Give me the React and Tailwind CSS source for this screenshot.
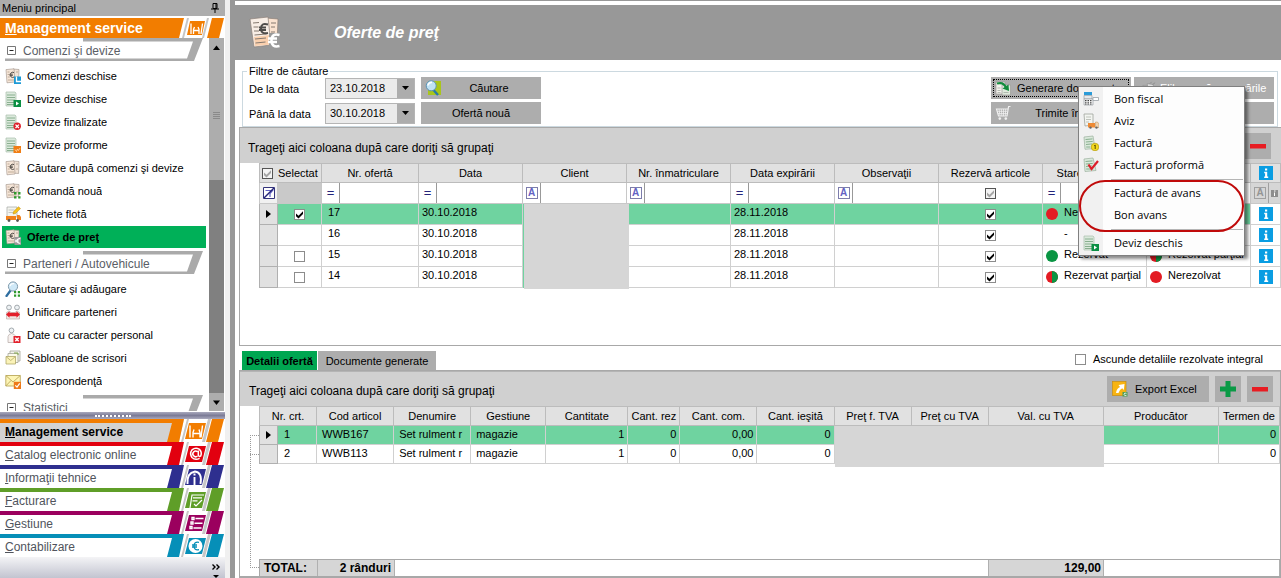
import React from "react";

/* ---------- icons ---------- */

function Icon({ children, className = "size-4" }) {
  return (
    <svg viewBox="0 0 16 16" className={`shrink-0 ${className}`} aria-hidden="true">
      {children}
    </svg>
  );
}

const GreenSheet = () => (
  <>
    <path d="M1 1h9l1 1v13H1z" fill="#dbe9dc" stroke="#a9bfac" strokeWidth=".7" />
    <path d="M2 4h8M2 6.500h8M2 9h8M2 11.500h8M2 13.500h8" stroke="#7fa886" strokeWidth=".9" />
  </>
);

const OfferSheets = () => (
  <>
    <path d="M8 1l6 .5-.4 12-6-.5z" fill="#f0e2d6" stroke="#9d9188" strokeWidth=".6" />
    <path d="M1 1.600L9 .8l1 13.200-8 .8z" fill="#f6e6d8" stroke="#9d9188" strokeWidth=".6" />
    <path d="M2.500 4h2M2.600 6.500h2M2.800 9h2M3 12h6M11 4h2M11 9h2" stroke="#a8927f" strokeWidth=".7" />
    <path d="M9 4.600a2.600 2.600 0 1 0 .2 4.400M4.800 6.200h3M4.800 7.600h3" stroke="#55504c" strokeWidth="1" fill="none" />
  </>
);

const Head = ({ x, y, r = 2.4 }) => <circle cx={x} cy={y} r={r} fill="#eef2f4" stroke="#8f979c" strokeWidth=".8" />;

const PlayBadge = () => (
  <>
    <rect x="8.500" y="9" width="7.500" height="7" fill="#0a8f43" />
    <path d="M11 10.500l3 2-3 2z" fill="#fff" />
  </>
);

const ICONS = {
  ordersOpen: (
    <>
      <OfferSheets />
      <rect x="9" y="8.500" width="7" height="7.500" fill="#1c9ad6" />
      <path d="M11.500 8.500v5h4.500" stroke="#fff" strokeWidth="1.300" fill="none" />
    </>
  ),
  sheetOpen: (
    <>
      <GreenSheet />
      <PlayBadge />
    </>
  ),
  sheetDone: (
    <>
      <GreenSheet />
      <circle cx="12.200" cy="12.300" r="3.700" fill="#dd1f2a" />
      <path d="M10.500 10.600l3.400 3.400M13.900 10.600L10.500 14" stroke="#fff" strokeWidth="1.300" />
    </>
  ),
  sheetProforma: (
    <>
      <GreenSheet />
      <rect x="8.500" y="9" width="7.500" height="7" fill="#f07d14" />
      <path d="M10 12.500l1.500 2 1-2.500 1 1.500 1.500-2.500" stroke="#ffd9a8" strokeWidth=".8" fill="none" />
    </>
  ),
  offers: <OfferSheets />,
  orderNew: (
    <>
      <OfferSheets />
      <path d="M9 9h2.500v2.500H9zM13.200 9h2.300v2.500h-2.300zM9 13.200h2.500v2.300H9zM13.200 13.200h2.300v2.300h-2.300z" fill="#2f9a2c" />
    </>
  ),
  fleet: (
    <>
      <path d="M2 1h10v10H2z" fill="#f3f4ef" stroke="#a5a7a3" strokeWidth=".7" />
      <path d="M3.500 4h6M3.500 6.500h5" stroke="#b9bbb6" strokeWidth=".8" />
      <path d="M1 10h10v4H1zM12 9h2.500L16 11v3h-4z" fill="#f0801c" />
      <circle cx="4" cy="14.500" r="1.400" fill="#555" />
      <circle cx="12.500" cy="14.500" r="1.400" fill="#555" />
      <path d="M8 8l.6-2.400L13.500.8l2 1.800-5 4.900z" fill="#f8c21b" stroke="#b98b10" strokeWidth=".5" />
    </>
  ),
  priceOffer: (
    <>
      <OfferSheets />
      <rect x="9.500" y="8" width="6.500" height="8" fill="#999" />
      <path d="M15.300 9.800a2.300 2.300 0 1 0 0 4.200M10 11.200h3.600M10 12.700h3.600" stroke="#fff" strokeWidth="1.100" fill="none" />
    </>
  ),
  search: (
    <>
      <path d="M5.500 9.500L1.500 15" stroke="#2e6ea0" strokeWidth="2.200" strokeLinecap="round" />
      <circle cx="8" cy="5.500" r="4.600" fill="#cfe8f7" stroke="#7f99ab" />
      <path d="M5 5a3.200 3.200 0 0 1 4-2.300" stroke="#fff" strokeWidth="1.300" fill="none" />
      <path d="M9 10h2.200v2.200H9zM12.800 10H15v2.200h-2.200zM9 13.500h2.200v2.200H9zM12.800 13.500H15v2.200h-2.200z" fill="#2f9a2c" />
    </>
  ),
  merge: (
    <>
      <path d="M1.500 15V8.500q2-2.500 5 0h3q3-2.500 5 0V15z" fill="#f1e7e4" stroke="#b3a7a3" strokeWidth=".6" />
      <Head x={4} y={3.5} />
      <Head x={12} y={3.5} />
      <path d="M1 10.500l3.500-3.300v1.600h7V7.200l3.500 3.300-3.500 3.300v-1.600h-7v1.600z" fill="#e3202b" />
    </>
  ),
  personal: (
    <>
      <path d="M3 15.500V9.500q.5-2.500 3.500-3 3 .5 3.500 2v7z" fill="#f7f1ef" stroke="#b3a7a3" strokeWidth=".7" />
      <Head x={6.5} y={3.4} />
      <rect x="8.500" y="9" width="7" height="7" fill="#e3202b" />
      <path d="M10.300 10.800l3.400 3.400M13.700 10.800l-3.400 3.400" stroke="#fff" strokeWidth="1.400" />
    </>
  ),
  letters: (
    <>
      <path d="M5 1h10v10H5z" fill="#f4f4ee" stroke="#a5a59a" strokeWidth=".8" />
      <path d="M3 3.500h10v9H3z" fill="#fbfaea" stroke="#a5a59a" strokeWidth=".8" />
      <path d="M1 6.500h9.500V14H1z" fill="#fbf3b8" stroke="#b1a86a" strokeWidth=".8" />
      <path d="M1 6.500l4.700 4 4.800-4" fill="none" stroke="#b1a86a" strokeWidth=".8" />
      <path d="M9 3h4v2" stroke="#83a84c" fill="none" />
    </>
  ),
  mail: (
    <>
      <path d="M.8 2.500h14.500V13H.8z" fill="#fdf5b5" stroke="#bba95c" strokeWidth=".9" />
      <path d="M.8 2.500L8 9l7.300-6.500M.8 13L6 7.500" fill="none" stroke="#bba95c" strokeWidth=".9" />
      <rect x="8.800" y="8.800" width="7.200" height="7.200" fill="#ee7a1a" />
      <path d="M10.300 12.300l1.700 1.800 2.700-3.800" stroke="#fff" strokeWidth="1.200" fill="none" />
    </>
  ),
  find: (
    <>
      <path d="M3 1h13v14H3z" fill="#a9c51b" />
      <path d="M8.500 10l4.500 5" stroke="#287aa8" strokeWidth="2.400" />
      <circle cx="6.200" cy="5.800" r="5" fill="#bfe2f5" stroke="#5d93b4" />
      <path d="M3 5.500a3.500 3.500 0 0 1 4-3" stroke="#fff" strokeWidth="1.700" fill="none" />
    </>
  ),
  generate: (
    <>
      <path d="M1 2h9v12H1z" fill="#f5f3ee" stroke="#9e9c98" strokeWidth=".7" />
      <path d="M7 5h8.500v10H7z" fill="#dfeadd" stroke="#9e9c98" strokeWidth=".7" />
      <path d="M2.500 8h3M2.500 10.500h3M8.500 12.500h5M2.500 12.500h3" stroke="#a4aca2" strokeWidth=".8" />
      <path d="M2 3.500q7-2 9 4.500" stroke="#128c3c" strokeWidth="2.200" fill="none" />
      <path d="M7.500 8.500l6.500 2.500-.5-6.500z" fill="#128c3c" />
    </>
  ),
  release: (
    <>
      <path d="M1 5h8v10H1z" fill="#c9c9c9" stroke="#8f8f8f" strokeWidth=".8" />
      <path d="M6 3l7 1-1 9-5-1z" fill="#dedede" stroke="#8f8f8f" strokeWidth=".8" />
      <path d="M9 3l2-2M12 4l3-2M3 8h4M3 11h4" stroke="#8f8f8f" strokeWidth="1.100" />
    </>
  ),
  cart: (
    <>
      <path d="M15.500 1.500H13.600L12 11H3.500L1.500 4h11.300" fill="none" stroke="#f0f0f0" strokeWidth="1.200" />
      <path d="M4 4l1 7M6.300 4l.6 7M8.500 4v7M10.700 4l-.4 7M2.200 6.300h10.200M2.800 8.600h9.300" stroke="#f0f0f0" strokeWidth=".8" />
      <circle cx="4.800" cy="13.600" r="1.300" fill="#f0f0f0" />
      <circle cx="10.800" cy="13.600" r="1.300" fill="#f0f0f0" />
    </>
  ),
  fiscal: (
    <>
      <path d="M1 1h8v3H1z" fill="#2a9bd8" />
      <path d="M1 4.500h8V8H1z" fill="#e5e9ec" stroke="#8a9298" strokeWidth=".6" />
      <path d="M1 8h9v6H1z" fill="#f6f6f6" stroke="#8a9298" strokeWidth=".6" />
      <path d="M2 9.500h7M2 11.300h7M2 13h7" stroke="#444" strokeWidth="1.100" strokeDasharray="1.500 1" />
      <path d="M10 6.500h5.500v3H10z" fill="#fff" stroke="#9aa1a6" strokeWidth=".8" />
    </>
  ),
  notice: (
    <>
      <path d="M1 1h9v11l-8 1z" fill="#f3f5f1" stroke="#9fa39d" strokeWidth=".8" />
      <path d="M3 4h5M3 6.500h5M3 9h3" stroke="#b1b6ae" strokeWidth=".8" />
      <path d="M5 10h7v4.500H5z" fill="#ee8a34" />
      <path d="M12.500 9h2l1.500 2v3.500h-3.500z" fill="#efd3b0" stroke="#b98e5b" strokeWidth=".5" />
      <circle cx="7.500" cy="14.600" r="1.200" fill="#666" />
      <circle cx="13.500" cy="14.600" r="1.200" fill="#666" />
    </>
  ),
  invoice: (
    <>
      <path d="M1 2l9-1 2 12.500-10 .8z" fill="#dbe9dc" stroke="#9bb09d" strokeWidth=".7" />
      <path d="M2.500 4.500l7-.6M2.800 7l7-.6M3 9.500l6-.6M3.200 12h4" stroke="#7fa886" strokeWidth=".9" />
      <circle cx="12" cy="12" r="3.800" fill="#f4d91e" stroke="#b59b0e" strokeWidth=".7" />
      <path d="M11.200 10.800l1-.8v4" stroke="#5a4d00" strokeWidth="1" fill="none" />
    </>
  ),
  proforma: (
    <>
      <path d="M1 2l9-1 3 12.500-11 1z" fill="#dbe9dc" stroke="#9bb09d" strokeWidth=".7" />
      <path d="M2.500 4.500l7-.6M2.800 7l7-.6M3 9.500l6-.6M3.200 12h7" stroke="#7fa886" strokeWidth=".9" />
      <path d="M5.500 7.500L8.500 12l6.500-8" stroke="#dd1f2a" strokeWidth="2.200" fill="none" />
    </>
  ),
  excel: (
    <>
      <rect x=".5" y=".5" width="13.500" height="14" fill="#f8b412" stroke="#c98f10" strokeWidth=".7" />
      <path d="M4 12Q4.500 7.500 8 6L6.500 4l6-1-.7 6-1.600-1.700Q7 9 6.500 12z" fill="#fff" />
      <rect x="10.500" y="11" width="5" height="4.500" fill="#4e9b55" />
      <path d="M14.500 12.300q-2.300-1-2.500 1 .2 1.900 2.500 1" stroke="#fff" strokeWidth=".8" fill="none" />
    </>
  ),
};

const MenuGlyph = ({ name, className }) => <Icon className={className}>{ICONS[name]}</Icon>;

function Tick({ className }) {
  return (
    <svg viewBox="0 0 9 9" className={`pointer-events-none col-start-1 row-start-1 size-[9px] ${className}`} aria-hidden="true">
      <path d="M1 3.500v2.700L3.500 8.500 8 4V1.300L3.500 5.800z" fill="currentColor" />
    </svg>
  );
}

function Check({ label, checked, muted }) {
  return (
    <span className="inline-grid shrink-0 place-items-center align-middle">
      <input
        type="checkbox"
        aria-label={label}
        defaultChecked={checked}
        className={
          muted
            ? "peer col-start-1 row-start-1 size-[11px] appearance-none border border-[#555] bg-[#f4f4f4]"
            : "peer col-start-1 row-start-1 size-[11px] appearance-none border border-[#8c8c8c] bg-white"
        }
      />
      <Tick className={muted ? "hidden text-[#a5a5a5] peer-checked:block" : "hidden text-black peer-checked:block"} />
    </span>
  );
}

const Info = () => (
  <svg viewBox="0 0 14 14" className="mx-auto size-3.5" role="img" aria-label="Informaţii">
    <rect width="14" height="14" fill="#0a9de2" />
    <path d="M6 2.500h2.200v2H6zM5.200 5.800h3v4.700h1V12H5.200v-1.500h.9V7.200h-.9z" fill="#fff" />
  </svg>
);

const Dot = ({ tone }) => (
  <svg viewBox="0 0 12 12" className="size-3 shrink-0" aria-hidden="true">
    <circle cx="6" cy="6" r="6" fill={tone === "green" ? "#0a9543" : "#e31b23"} />
    {tone === "half" && <path d="M6 0a6 6 0 0 1 0 12z" fill="#0a9543" />}
  </svg>
);

const Plus = () => (
  <svg viewBox="0 0 16 16" className="size-4" aria-hidden="true">
    <path d="M5.500 0h5v5.500H16v5h-5.500V16h-5v-5.500H0v-5h5.500z" fill="#0a9a46" />
  </svg>
);

const Minus = () => (
  <svg viewBox="0 0 16 16" className="size-4" aria-hidden="true">
    <path d="M0 6h16v4.500H0z" fill="#e81c22" />
  </svg>
);

/* ---------- sidebar ---------- */

const GROUPS = [
  {
    title: "Comenzi şi devize",
    items: [
      ["Comenzi deschise", "ordersOpen"],
      ["Devize deschise", "sheetOpen"],
      ["Devize finalizate", "sheetDone"],
      ["Devize proforme", "sheetProforma"],
      ["Căutare după comenzi şi devize", "offers"],
      ["Comandă nouă", "orderNew"],
      ["Tichete flotă", "fleet"],
      ["Oferte de preţ", "priceOffer"],
    ],
  },
  {
    title: "Parteneri / Autovehicule",
    items: [
      ["Căutare şi adăugare", "search"],
      ["Unificare parteneri", "merge"],
      ["Date cu caracter personal", "personal"],
      ["Şabloane de scrisori", "letters"],
      ["Corespondenţă", "mail"],
    ],
  },
  { title: "Statistici", items: [] },
];

const MODULES = [
  ["Management service", "#f27d00", "car"],
  ["Catalog electronic online", "#e2000f", "at"],
  ["Informaţii tehnice", "#2e2f8f", "info"],
  ["Facturare", "#5f9e28", "bill"],
  ["Gestiune", "#9b005e", "stock"],
  ["Contabilizare", "#068fb8", "euro"],
];

const MODULE_GLYPHS = {
  car: (
    <path d="M25 6.500v12M37.500 6.500l-1.500 12M28 18.500v-5l1-3M35 18.500v-5l-1-3M28 14.500h7" fill="none" stroke="#fff" strokeWidth="1.400" />
  ),
  at: (
    <path d="M32.500 14a2.800 2.800 0 1 1 0-4.200M33.300 8.500v4.700q.6 2 2.500.6 1.500-4-1.700-6.700-3.800-1.900-7.100.8-2.700 3.600 0 7.600 3.200 3 7.600.8" fill="none" stroke="#fff" strokeWidth="1.500" />
  ),
  info: <path d="M22.500 19q-1-11 7.500-12.500 7.500 1 5.500 12.500M29.500 20v-8M28.500 9.500h2" fill="none" stroke="#fff" strokeWidth="1.900" />,
  bill: <path d="M25 20L27 7h12M28 9.800h9M27.500 12.800h5M29 16l2 2 6-6" fill="none" stroke="#fff" strokeWidth="1.200" />,
  stock: <path d="M27 6.500h2v2h-2zM26 11h2v2h-2zM25 15.500h2v2h-2zM30.500 7.500h8M29.500 12.300h8M28.500 17h8" fill="none" stroke="#fff" strokeWidth="1.400" />,
  euro: (
    <>
      <ellipse cx="30.500" cy="12" rx="7" ry="7" fill="#fff" />
      <path d="M34 8.300q-5-1-5 3.700t5 3.700M27 11h5M27 13h5" stroke="#068fb8" strokeWidth="1.300" fill="none" />
    </>
  ),
};

function ModuleEdge({ color, glyph }) {
  return (
    <svg viewBox="0 0 60 23" preserveAspectRatio="none" className="h-full w-[60px] shrink-0" aria-hidden="true">
      <path d="M19 0h41v23H14z" fill="#fff" />
      <path d="M0 0h19l-5 23H2L7 4H0z" fill={color} />
      <path d="M22 0h2l-6 23h-2zM43 0h3l-6 23h-3z" fill="#c6c6c6" />
      <path d="M24 4h17l-4 16H20z" fill={color} />
      {MODULE_GLYPHS[glyph]}
      <path d="M47 0h12l-6 23H41z" fill={color} />
    </svg>
  );
}

function Underlined({ text }) {
  return (
    <>
      <span className="underline">{text[0]}</span>
      {text.slice(1)}
    </>
  );
}

function GroupHeader({ title }) {
  return (
    <div className="relative flex h-[23px] w-[203px] shrink-0 items-center gap-[7px] pt-0.5 pl-[7px] text-xs text-[#5a5e66]">
      <svg viewBox="0 0 203 23" className="absolute inset-0 h-full w-full" aria-hidden="true">
        <path d="M83 0h120l-9 23H5v-2.500h182L193 3.500H83z" fill="#aaa" />
      </svg>
      <svg viewBox="0 0 9 9" className="relative size-[9px]" aria-hidden="true">
        <path d="M.5.5h8v8h-8z" fill="#fff" stroke="#777" />
        <path d="M2.500 4.500h4" stroke="#222" />
      </svg>
      <span className="relative">{title}</span>
    </div>
  );
}

function Sidebar() {
  return (
    <aside className="flex h-full w-[225px] shrink-0 flex-col bg-white">
      <div className="flex h-4 shrink-0 items-center justify-between bg-[#adadad] pr-1.5 pl-0.5">
        <span>Meniu principal</span>
        <svg viewBox="0 0 8 10" className="h-2.5 w-2" aria-hidden="true">
          <path d="M2 .5h4v5H2zM5 .5v5M0 6h8M4 6v4" fill="none" stroke="#000" />
        </svg>
      </div>
      <h2 className="mt-0.5 flex h-5 shrink-0 items-center bg-[#f27d00] pl-[5px] text-sm font-bold text-white">
        <span className="flex-1 truncate">
          <Underlined text="Management service" />
        </span>
        <svg viewBox="0 0 46 20" className="h-5 w-[46px]" aria-hidden="true">
          <path d="M5 0h41v20H0z" fill="#fff" />
          <path d="M8 0h2L5 20H3zM28 0h2l-5 20h-2z" fill="#c6c6c6" />
          <path d="M11 3h15l-3 14H8z" fill="#f27d00" />
          <path d="M12 5.500V16M23.500 5.500L22 16M14.500 16v-4.500l1-2.500M20 16v-4.500L19 9M14.500 12.500H20" fill="none" stroke="#fff" strokeWidth="1.300" />
          <path d="M33 0h12l-5 20H28z" fill="#f27d00" />
        </svg>
      </h2>
      <div className="flex min-h-0 flex-1">
        <nav className="flex min-w-0 flex-1 flex-col overflow-hidden">
          {GROUPS.map((group) => (
            <React.Fragment key={group.title}>
              <GroupHeader title={group.title} />
              <ul className="my-[3px] shrink-0">
                {group.items.map(([label, icon]) => (
                  <li key={label} className="pr-[3px] pl-0.5">
                    <a
                      href="#"
                      className={
                        icon === "priceOffer"
                          ? "flex h-[23px] items-center gap-1.5 border-t border-white bg-[#00b058] pl-[3px] font-bold"
                          : "flex h-[23px] items-center gap-1.5 pl-[3px]"
                      }
                    >
                      <MenuGlyph name={icon} />
                      <span className="truncate">{label}</span>
                    </a>
                  </li>
                ))}
              </ul>
            </React.Fragment>
          ))}
        </nav>
        <div className="mr-px flex w-[15px] shrink-0 flex-col bg-[#808080]" aria-hidden="true">
          <div className="flex h-[142px] flex-col items-center bg-[#adadad]">
            <svg viewBox="0 0 15 16" className="mt-0.5 h-4 w-[15px]">
              <path d="M7.500 5.500L11 10H4z" />
            </svg>
            <svg viewBox="0 0 7 8" className="mt-14 h-2 w-[7px]">
              <path d="M0 .5h7M0 2.500h7M0 4.500h7M0 6.500h7" stroke="#8a8a8a" />
            </svg>
          </div>
          <svg viewBox="0 0 15 18" className="mt-auto h-[18px] w-[15px] bg-[#adadad]">
            <path d="M7.500 12L11 7.500H4z" />
          </svg>
        </div>
      </div>
      <div className="mt-px flex h-[7px] shrink-0 items-center justify-center bg-linear-to-b from-[#a9a9bd] via-[#7c7c97] to-[#a9a9bd]">
        <span className="w-9 border-t-2 border-dotted border-white" />
      </div>
      {MODULES.map(([label, color, glyph], i) => (
        <a
          key={label}
          href="#"
          className={
            i === 0
              ? "flex h-[23px] shrink-0 bg-[#d2d2d2] text-xs font-bold text-black"
              : "flex h-[23px] shrink-0 bg-white text-xs text-[#50545c]"
          }
        >
          <span className="flex-1 border-t-4 pl-[5px] leading-[18px]" style={{ borderColor: color }}>
            <Underlined text={label} />
          </span>
          <ModuleEdge color={color} glyph={glyph} />
        </a>
      ))}
      <div className="flex h-[21px] shrink-0 items-end justify-end bg-linear-to-b from-[#f4f4f6] to-[#c2c4d0] pr-[5px]">
        <svg viewBox="0 0 8 14" className="h-3.5 w-2" aria-hidden="true">
          <path d="M.5.5L3 3 .5 5.500M4.500.5L7 3 4.500 5.500" fill="none" stroke="#000" strokeWidth="1.400" />
          <path d="M1 11h6l-3 3z" />
        </svg>
      </div>
    </aside>
  );
}

/* ---------- main area ---------- */

function DateField({ id, label, value }) {
  return (
    <div className="flex h-[22px] items-center">
      <label htmlFor={id} className="w-[76px] pt-0.5">
        {label}
      </label>
      <div className="flex h-[21px] w-[90px] border border-[#b5b5b5] bg-[#ebebeb]">
        <input id={id} defaultValue={value} className="min-w-0 flex-1 bg-transparent pl-1 outline-none" />
        <button type="button" aria-label={`Alege ${label}`} className="flex w-[17px] items-center justify-center bg-[#adadad]">
          <svg viewBox="0 0 7 4" className="h-1 w-[7px]" aria-hidden="true">
            <path d="M0 0h7L3.500 4z" />
          </svg>
        </button>
      </div>
    </div>
  );
}

const MENU = [
  ["Bon fiscal", "fiscal"],
  ["Aviz", "notice"],
  ["Factură", "invoice"],
  ["Factură proformă", "proforma"],
  null,
  ["Factură de avans"],
  ["Bon avans"],
  null,
  ["Deviz deschis", "sheetOpen"],
];

function DocumentMenu() {
  return (
    <div
      role="menu"
      className="absolute top-[9px] left-[87px] z-10 w-[167px] border border-[#808080] bg-linear-to-r from-[#f1f1f1] from-[24px] to-[#fdfdfd] to-[24px] py-px font-['Open_Sans',sans-serif] shadow-[3px_3px_3px_rgba(0,0,0,0.45)]"
    >
      {MENU.map((item, i) =>
        item ? (
          <button key={item[0]} type="button" role="menuitem" className="flex h-[22px] w-full items-center pl-1 text-left">
            <span className="w-[31px]">{item[1] && <MenuGlyph name={item[1]} />}</span>
            {item[0]}
          </button>
        ) : (
          <div key={i} role="separator" className="mr-px ml-8 flex h-1.5 items-center">
            <span className="w-full border-t border-[#b5b5b5]" />
          </div>
        ),
      )}
      <span className="pointer-events-none absolute inset-x-0 top-[93px] h-[52px] rounded-[26px] border-2 border-[#c00a0a]" />
    </div>
  );
}

function Filters() {
  return (
    <fieldset className="mr-[3px] ml-[7px] border border-[#ccd9e0] pr-[3px] pb-px pl-1.5">
      <legend className="-ml-0.5 h-3.5 px-0.5 leading-[14px]">Filtre de căutare</legend>
      <div className="-mt-px flex justify-between pb-px">
        <div className="grid grid-cols-[172px_120px] gap-y-[3px]">
          <DateField id="from" label="De la data" value="23.10.2018" />
          <button type="button" className="relative flex items-center justify-center bg-[#adadad] pl-4">
            <span className="absolute left-1">
              <MenuGlyph name="find" />
            </span>
            Căutare
          </button>
          <DateField id="to" label="Până la data" value="30.10.2018" />
          <button type="button" className="bg-[#adadad]">
            Ofertă nouă
          </button>
        </div>
        <div className="grid grid-cols-[140px_140px] gap-x-[3px] gap-y-[3px]">
          <div className="relative h-[22px]">
            <button
              type="button"
              className="flex h-full w-full items-center gap-1.5 bg-[#adadad] pl-1 whitespace-nowrap outline-1 -outline-offset-3 outline-black outline-dotted"
            >
              <MenuGlyph name="generate" />
              Generare documente
            </button>
            <DocumentMenu />
          </div>
          <button type="button" disabled className="flex items-center gap-1 bg-[#adadad] pl-2 whitespace-nowrap text-white">
            <MenuGlyph name="release" className="size-3.5" />
            Eliberează rezervările
          </button>
          <button type="button" className="flex h-[22px] items-center bg-[#adadad] pl-1">
            <MenuGlyph name="cart" />
            <span className="flex-1 pr-1.5">Trimite în coş</span>
          </button>
          <button type="button" aria-label="Opţiuni" className="bg-[#adadad]" />
        </div>
      </div>
    </fieldset>
  );
}

const TH = "h-[19px] border-r border-b border-[#bcbcbc] bg-[#e1e1e1] p-0 text-center font-normal whitespace-nowrap overflow-hidden";
const TD = "border-r border-b border-[#d0d0d0] p-0 align-top leading-4 whitespace-nowrap overflow-hidden";
const TD_CHECK = "border-r border-b border-[#d0d0d0] p-0 text-center align-middle leading-none";
const GUTTER = "border-r border-b border-l border-[#b0b0b0] bg-[#e1e1e1] p-0";

const RowArrow = () => (
  <svg viewBox="0 0 5 8" className="mx-auto h-2 w-[5px]" aria-label="Rând curent" role="img">
    <path d="M0 0l5 4-5 4z" />
  </svg>
);

function LetterA({ muted }) {
  return (
    <span
      className={
        muted
          ? "flex size-3 items-center justify-center border border-[#a0a0a0] text-[10px] font-bold text-[#949494]"
          : "flex size-3 items-center justify-center border border-[#7d7dac] text-[10px] font-bold text-[#6262c4]"
      }
    >
      A
    </span>
  );
}

function FilterCell({ op, label }) {
  return (
    <td className="h-[21px] border-r border-b border-[#c8c8c8] p-0">
      <div className="flex h-5">
        <span className="flex w-[18px] shrink-0 items-center justify-center border-r border-[#999] text-[13px] text-[#25257a]">
          {op === "A" ? <LetterA /> : "="}
        </span>
        <input aria-label={`Filtru ${label}`} className="w-0 min-w-0 flex-1 outline-none" />
      </div>
    </td>
  );
}

const OFFERS = [
  { nr: "17", picked: true, reserve: ["red", "Nerezervat"], solve: ["red", "Nerezolvat"] },
  { nr: "16", reserve: [null, "-"], solve: [null, "-"] },
  { nr: "15", picked: false, reserve: ["green", "Rezervat"], solve: ["half", "Rezolvat parţial"] },
  { nr: "14", picked: false, reserve: ["half", "Rezervat parţial"], solve: ["red", "Nerezolvat"] },
];

const OFFER_COLUMNS = [
  ["Nr. ofertă", "="],
  ["Data", "="],
  ["Client", "A"],
  ["Nr. înmatriculare", "A"],
  ["Data expirării", "="],
  ["Observaţii", "A"],
];

function Status({ value: [tone, text] }) {
  return (
    <div className="flex h-5 items-start gap-1.5 pl-[3px]">
      <span className="mt-1 w-3">{tone && <Dot tone={tone} />}</span>
      {text}
    </div>
  );
}

function GroupHint() {
  return <span className="flex-1 pt-1 text-xs">Trageţi aici coloana după care doriţi să grupaţi</span>;
}

function OffersGrid() {
  return (
    <section className="ml-1 border-t border-l border-b border-[#a8a8a8] pb-[57px]">
      <div className="flex h-[35px] items-center justify-between bg-[#d0d0d0] pr-2.5 pl-2">
        <GroupHint />
        <button type="button" aria-label="Şterge oferta" className="flex size-[26px] items-center justify-center bg-[#adadad]">
          <Minus />
        </button>
      </div>
      <div className="pl-[19px]">
        <table className="w-full table-fixed border-separate border-spacing-0 border-t border-[#bcbcbc]">
          <colgroup>
            <col className="w-[19px]" />
            <col className="w-[44px]" />
            <col className="w-[97px]" />
            <col className="w-[104px]" />
            <col className="w-[104px]" />
            <col className="w-[104px]" />
            <col className="w-[104px]" />
            <col className="w-[104px]" />
            <col className="w-[104px]" />
            <col className="w-[104px]" />
            <col className="w-[104px]" />
            <col className="w-[30px]" />
          </colgroup>
          <thead>
            <tr>
              <th colSpan={2} className={`${TH} border-l`}>
                <span className="flex items-center gap-[5px] pl-0.5">
                  <Check label="Selectează tot" checked muted />
                  Selectat
                </span>
              </th>
              {OFFER_COLUMNS.map(([name]) => (
                <th key={name} className={TH}>
                  {name}
                </th>
              ))}
              <th className={TH}>Rezervă articole</th>
              <th className={TH}>Stare rezervare</th>
              <th className={TH}>Stare rezolvare</th>
              <th className={TH}>
                <Info />
              </th>
            </tr>
          </thead>
          <tbody>
            <tr>
              <td className="h-[21px] border-r border-b border-l border-[#c8c8c8] bg-[#f1f1f1] p-0">
                <svg viewBox="0 0 12 12" className="mx-auto size-3" role="img" aria-label="Şterge filtrele">
                  <path d="M.5.5h11v11H.5z" fill="#fff" stroke="#34347c" />
                  <path d="M2.500 3.500h7L7 6.500V10" fill="none" stroke="#6262c4" strokeWidth="1.200" />
                  <path d="M1 11L11 1" stroke="#25257a" strokeWidth="1.400" />
                </svg>
              </td>
              <td className="border-r border-b border-[#c8c8c8] bg-[#c9c9c9]" />
              {OFFER_COLUMNS.map(([name, op]) => (
                <FilterCell key={name} op={op} label={name} />
              ))}
              <td className={TD_CHECK}>
                <Check label="Filtru rezervă articole" checked muted />
              </td>
              <FilterCell op="=" label="stare rezervare" />
              <FilterCell op="=" label="stare rezolvare" />
              <td className="border-r border-b border-[#c8c8c8] bg-[#d6d6d6] p-0">
                <div className="flex h-5 items-center gap-0.5 pl-[3px]">
                  <LetterA muted />
                  <span className="flex h-full items-center border-l border-[#a0a0a0] pl-0.5">
                    <svg viewBox="0 0 7 7" className="size-[7px]" aria-hidden="true">
                      <path d="M0 0h7v7H0z" fill="#8e8e8e" />
                      <path d="M3 1h1.500M3.500 2.500V6" stroke="#fff" fill="none" />
                    </svg>
                  </span>
                </div>
              </td>
            </tr>
            {OFFERS.map((o, i) => (
              <tr key={o.nr} className={i === 0 ? "h-[21px] bg-[#6fd3a0]" : "h-[21px] bg-white"}>
                <td className={GUTTER}>{i === 0 && <RowArrow />}</td>
                <td className={TD_CHECK}>
                  {o.picked !== undefined && <Check label={`Selectează oferta ${o.nr}`} checked={o.picked} />}
                </td>
                <td className={`${TD} pl-1.5`}>{o.nr}</td>
                <td className={`${TD} pl-[3px]`}>30.10.2018</td>
                {i === 0 && (
                  <td rowSpan={4} className="relative p-0">
                    <span className="absolute top-0 -right-0.5 -bottom-px left-px bg-[#d6d6d6]" />
                  </td>
                )}
                <td className={TD} />
                <td className={`${TD} pl-[3px]`}>28.11.2018</td>
                <td className={TD} />
                <td className={TD_CHECK}>
                  <Check label={`Rezervă articole oferta ${o.nr}`} checked />
                </td>
                <td className={TD}>
                  <Status value={o.reserve} />
                </td>
                <td className={TD}>
                  <Status value={o.solve} />
                </td>
                <td className="border-r border-b border-[#d0d0d0] bg-white p-0">
                  <Info />
                </td>
              </tr>
            ))}
          </tbody>
        </table>
      </div>
    </section>
  );
}

const DETAIL_HEADS = [
  "Cod articol",
  "Denumire",
  "Gestiune",
  "Cantitate",
  "Cant. rez",
  "Cant. com.",
  "Cant. ieşită",
  "Preţ f. TVA",
  "Preţ cu TVA",
  "Val. cu TVA",
  "Producător",
  "Termen de",
];

const DetailCols = () => (
  <colgroup>
    <col className="w-[19px]" />
    <col className="w-[39px]" />
    <col className="w-[77px]" />
    <col className="w-[77px]" />
    <col className="w-[75px]" />
    <col className="w-[82px]" />
    <col className="w-[52px]" />
    <col className="w-[77px]" />
    <col className="w-[77px]" />
    <col className="w-[77px]" />
    <col className="w-[77px]" />
    <col className="w-[115px]" />
    <col className="w-[115px]" />
    <col className="w-[61px]" />
  </colgroup>
);

function DetailsGrid() {
  const total = "border-r border-[#b0b0b0] bg-[#d6d6d6] p-0 text-right";
  return (
    <section className="ml-1 flex min-h-0 flex-1 flex-col border-t border-r border-b-2 border-l border-[#a8a8a8]">
      <div className="flex h-[35px] shrink-0 items-center gap-1.5 border-t border-[#b4b4b4] bg-[#d0d0d0] pr-[7px] pl-[9px]">
        <GroupHint />
        <button type="button" className="flex h-[26px] w-[102px] items-center gap-[7px] bg-[#adadad] pl-[5px]">
          <MenuGlyph name="excel" />
          Export Excel
        </button>
        <button type="button" aria-label="Adaugă" className="flex size-[26px] items-center justify-center bg-[#adadad]">
          <Plus />
        </button>
        <button type="button" aria-label="Şterge" className="flex size-[26px] items-center justify-center bg-[#adadad]">
          <Minus />
        </button>
      </div>
      <div className="flex min-h-0 flex-1">
        <div className="flex w-[19px] shrink-0 flex-col pt-[29px] pb-2 pl-2.5" aria-hidden="true">
          <span className="h-[19px] border-t border-l border-dotted border-[#999]" />
          <span className="flex-1 border-t border-b border-l border-dotted border-[#999]" />
        </div>
        <div className="flex min-w-0 flex-1 flex-col">
          <table className="w-full table-fixed border-separate border-spacing-0 border-t border-[#bcbcbc]">
            <DetailCols />
            <thead>
              <tr>
                <th colSpan={2} className={`${TH} border-l`}>
                  Nr. crt.
                </th>
                {DETAIL_HEADS.map((h) => (
                  <th key={h} className={TH}>
                    {h}
                  </th>
                ))}
              </tr>
            </thead>
            <tbody>
              {["WWB167", "WWB113"].map((code, i) => (
                <tr key={code} className={i === 0 ? "h-[19px] bg-[#6fd3a0]" : "h-[19px] bg-white"}>
                  <td className={GUTTER}>{i === 0 && <RowArrow />}</td>
                  <td className={`${TD} pl-1.5`}>{i + 1}</td>
                  <td className={`${TD} pl-[5px]`}>{code}</td>
                  <td className={`${TD} pl-[5px]`}>Set rulment r</td>
                  <td className={`${TD} pl-[5px]`}>magazie</td>
                  <td className={`${TD} pr-[3px] text-right`}>1</td>
                  <td className={`${TD} pr-[3px] text-right`}>0</td>
                  <td className={`${TD} pr-[3px] text-right`}>0,00</td>
                  <td className={`${TD} pr-[3px] text-right`}>0</td>
                  {i === 0 && (
                    <td colSpan={3} rowSpan={2} className="relative bg-[#d6d6d6] p-0">
                      <span className="absolute inset-0 -bottom-[3px] bg-[#d6d6d6]" />
                    </td>
                  )}
                  <td className={TD} />
                  <td className={`${TD} pr-[3px] text-right`}>0</td>
                </tr>
              ))}
            </tbody>
          </table>
          <table className="mt-auto w-full table-fixed border-separate border-spacing-0 border-t border-l border-[#a8a8a8] text-xs font-bold">
            <DetailCols />
            <tbody>
              <tr className="h-4 leading-4">
                <th colSpan={2} scope="row" className={`${total} pl-1 !text-left`}>
                  TOTAL:
                </th>
                <td className={`${total} pr-[3px]`}>2 rânduri</td>
                <td colSpan={8} className="border-r border-[#b0b0b0] p-0" />
                <td className={`${total} pr-0.5`}>129,00</td>
                <td colSpan={2} className="border-r border-[#b0b0b0] p-0" />
              </tr>
            </tbody>
          </table>
        </div>
      </div>
    </section>
  );
}

export default function App() {
  return (
    <div className="flex h-screen w-full overflow-hidden bg-[#f0f0f0] font-['Liberation_Sans',Arial,sans-serif] text-[11px] leading-4 text-black">
      <Sidebar />
      <main className="ml-[5px] flex min-w-0 flex-1 flex-col border-l-5 border-[#989898] bg-white">
        <div className="h-[5px] shrink-0 border-t border-[#989898]" />
        <header className="flex h-[55px] shrink-0 items-center bg-[#989898] pl-3.5">
          <svg viewBox="0 0 32 34" className="h-[34px] w-8" aria-hidden="true">
            <path d="M17 2l12 1-1 25-12-1z" fill="#fbe3d0" stroke="#8b8078" strokeWidth=".7" />
            <path d="M1 3l18-2 3 28-17 2z" fill="#f8eee6" stroke="#8b8078" strokeWidth=".7" />
            <path d="M5 21l15.500-2 1 9.500L6 30z" fill="#fad0ae" />
            <path d="M4 7l6-.5M4.500 11h5M5 15h5M5.500 19l12-1M6 23l11-1M6.500 27l10-1M22 7h5M22 11h4M22 16h4" stroke="#85796f" strokeWidth="1" />
            <path d="M19 8.500q-7-2-7 4t7 4.500M10 11.500h7M10 14h7" stroke="#4e4c4a" strokeWidth="2" fill="none" />
            <path d="M20 17h11v14H20z" fill="#999" />
            <path d="M30.500 19q-8-2-8 5.500t8 5.500M19 22.500h9M19 26h9" stroke="#fff" strokeWidth="2.500" fill="none" />
          </svg>
          <h1 className="pl-[53px] text-base font-bold text-white italic">Oferte de preţ</h1>
        </header>
        <div className="shrink-0 pt-1">
          <Filters />
        </div>
        <OffersGrid />
        <div className="flex h-[24px] shrink-0 items-end justify-between pr-[18px] pl-[7px]">
          <div role="tablist" className="flex gap-px">
            <button type="button" role="tab" aria-selected="true" className="h-[19px] w-[75px] bg-[#00a651] font-bold whitespace-nowrap">
              Detalii ofertă
            </button>
            <button type="button" role="tab" aria-selected="false" className="h-[19px] w-[118px] bg-[#adadad] whitespace-nowrap">
              Documente generate
            </button>
          </div>
          <label className="flex h-[22px] items-center gap-[7px]">
            <Check label="Ascunde detaliile rezolvate integral" />
            Ascunde detaliile rezolvate integral
          </label>
        </div>
        <DetailsGrid />
      </main>
    </div>
  );
}
